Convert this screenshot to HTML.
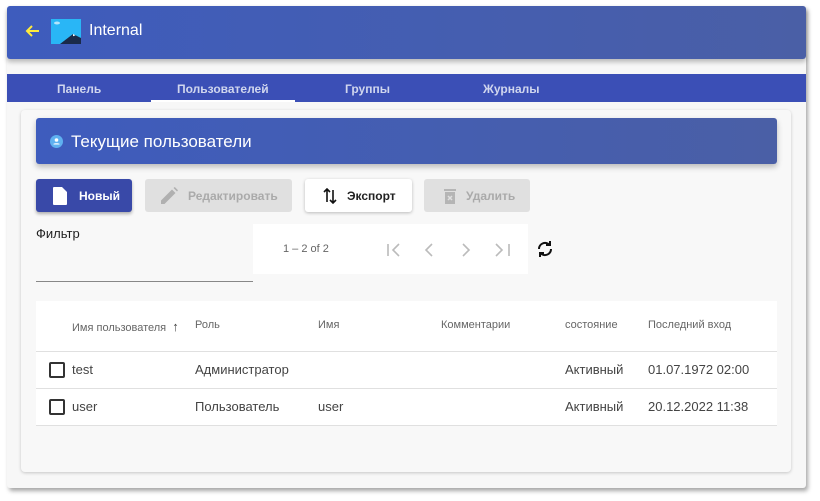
<!DOCTYPE html>
<html><head><meta charset="utf-8"><style>
*{box-sizing:border-box;margin:0;padding:0}
body{width:820px;height:501px;background:#fff;font-family:"Liberation Sans",Arial,sans-serif;position:relative;overflow:hidden}
.frame{position:absolute;left:7px;top:6px;width:799px;height:482px;background:#f7f7f7;box-shadow:2px 3px 4px rgba(0,0,0,.35);border-radius:3px}
.hdr{position:absolute;left:7px;top:6px;width:799px;height:53px;background:linear-gradient(90deg,#3e5cbd,#4a5fa6);border-radius:3px;box-shadow:0 3px 5px rgba(0,0,0,.25);color:#fff}
.tabs{position:absolute;left:7px;top:74px;width:799px;height:28px;background:#3b4fb6;color:#d0d6ee;font-size:12px;font-weight:bold}
.tabs span{position:absolute;top:8px}
.card{position:absolute;left:21px;top:110px;width:770px;height:362px;background:#f8f8f8;border-radius:4px;box-shadow:0 1px 3px rgba(0,0,0,.2)}
.ctitle{position:absolute;left:36px;top:118px;width:741px;height:46px;background:linear-gradient(90deg,#3e5cbd,#4a5fa6);border-radius:3px;box-shadow:0 3px 6px rgba(0,0,0,.25);color:#fff;font-size:17px}
.btn{position:absolute;top:179px;height:33px;border-radius:3px;font-size:12px;font-weight:bold;display:flex;align-items:center}
.tbl{position:absolute;left:36px;top:301px;width:741px;height:125px;background:#fff}
.tbl div{position:absolute}
.th{font-size:11px;color:#666;top:18px}
.td{font-size:13px;color:#444}
.line{left:0;width:741px;height:1px;background:#e0e0e0}
.cb{width:16px;height:16px;border:2px solid #333;border-radius:2px;left:13px}
</style></head><body>
<div class="frame"></div>
<div class="hdr">
 <svg style="position:absolute;left:17px;top:17px" width="16" height="16" viewBox="0 0 16 16"><path d="M15 8H3M8 3L3 8l5 5" stroke="#ffeb3b" stroke-width="2" fill="none"/></svg>
 <svg style="position:absolute;left:44px;top:13px" width="30" height="25" viewBox="0 0 30 25"><rect width="30" height="25" fill="#29b6f6"/><path d="M9 25L22 15l8 4v6z" fill="#1a2a4a"/><path d="M22 15l2.5 1.2-2.5 1z" fill="#fff"/><ellipse cx="6" cy="4" rx="3" ry="1.5" fill="#b3e5fc"/></svg>
 <span style="position:absolute;left:82px;top:16px;font-size:16px">Internal</span>
</div>
<div class="tabs">
 <span style="left:50px">Панель</span>
 <span style="left:170px">Пользователей</span>
 <span style="left:338px">Группы</span>
 <span style="left:476px">Журналы</span>
 <div style="position:absolute;left:144px;top:26px;width:144px;height:2px;background:#fff"></div>
</div>
<div class="card"></div>
<div class="ctitle">
 <svg style="position:absolute;left:14px;top:17px" width="13" height="13" viewBox="0 0 13 13"><circle cx="6.5" cy="6.5" r="6.5" fill="#5fb0f0"/><circle cx="6.5" cy="5" r="1.8" fill="#fff"/><path d="M3.5 9.5h6v-.5c0-1-6-1-6 0z" fill="#fff"/></svg>
 <span style="position:absolute;left:35px;top:14px">Текущие пользователи</span>
</div>
<div class="btn" style="left:36px;width:96px;background:#3949a8;color:#fff;box-shadow:0 2px 3px rgba(0,0,0,.3)">
 <svg style="margin-left:17px" width="14" height="18" viewBox="0 0 14 18"><path d="M1 0h8l5 5v12a1 1 0 0 1-1 1H1a1 1 0 0 1-1-1V1a1 1 0 0 1 1-1z" fill="#fff"/></svg>
 <span style="margin-left:12px">Новый</span></div>
<div class="btn" style="left:145px;width:147px;background:#e0e0e0;color:#aaa">
 <svg style="margin-left:16px" width="17" height="17" viewBox="0 0 17 17"><path d="M0 17v-3.5L11 2.5 14.5 6 3.5 17zM12.5 1l1.3-1L17 3.2l-1 1.3z" fill="#b0b0b0"/></svg>
 <span style="margin-left:10px">Редактировать</span></div>
<div class="btn" style="left:305px;width:107px;background:#fff;color:#222;box-shadow:0 1px 3px rgba(0,0,0,.25)">
 <svg style="margin-left:18px" width="14" height="16" viewBox="0 0 14 16" fill="none" stroke="#111" stroke-width="1.6"><path d="M4 14V1M1 4l3-3 3 3M10 2v13M7 12l3 3 3-3"/></svg>
 <span style="margin-left:10px">Экспорт</span></div>
<div class="btn" style="left:424px;width:106px;background:#e0e0e0;color:#aaa">
 <svg style="margin-left:20px" width="12" height="16" viewBox="0 0 12 16"><rect x="0" y="1" width="12" height="2" fill="#b5b5b5"/><rect x="1" y="4" width="10" height="12" fill="#b5b5b5"/><path d="M4 8l4 4M8 8l-4 4" stroke="#e0e0e0" stroke-width="1.5"/></svg>
 <span style="margin-left:10px">Удалить</span></div>
<div style="position:absolute;left:36px;top:226px;font-size:13px;color:#222">Фильтр</div>
<div style="position:absolute;left:36px;top:281px;width:217px;height:1px;background:#888"></div>
<div style="position:absolute;left:253px;top:224px;width:275px;height:50px;background:#fff"></div>
<div style="position:absolute;left:283px;top:243px;font-size:11px;color:#666">1 – 2 of 2</div>
<svg style="position:absolute;left:386px;top:242px" width="130" height="16" viewBox="0 0 130 16" fill="none" stroke="#bbb" stroke-width="1.6"><path d="M2 2v12M13 2L7 8l6 6M46 2l-6 6 6 6M77 2l6 6-6 6M110 2l6 6-6 6M123 2v12"/></svg>
<svg style="position:absolute;left:536px;top:240px" width="18" height="18" viewBox="0 0 18 18" fill="none" stroke="#111" stroke-width="2"><path d="M3 9a6 6 0 0 1 10-4.5M15 9a6 6 0 0 1-10 4.5"/><path d="M14 1v4h-4M4 17v-4h4" /></svg>
<div class="tbl">
 <div class="th" style="left:36px">Имя пользователя&nbsp; <span style="font-size:13px;color:#444">↑</span></div>
 <div class="th" style="left:159px">Роль</div>
 <div class="th" style="left:282px">Имя</div>
 <div class="th" style="left:405px">Комментарии</div>
 <div class="th" style="left:529px">состояние</div>
 <div class="th" style="left:612px">Последний вход</div>
 <div class="line" style="top:50px"></div>
 <div class="cb" style="top:61px"></div>
 <div class="td" style="left:36px;top:61px">test</div>
 <div class="td" style="left:159px;top:61px">Администратор</div>
 <div class="td" style="left:529px;top:61px">Активный</div>
 <div class="td" style="left:612px;top:61px">01.07.1972 02:00</div>
 <div class="line" style="top:87px"></div>
 <div class="cb" style="top:98px"></div>
 <div class="td" style="left:36px;top:98px">user</div>
 <div class="td" style="left:159px;top:98px">Пользователь</div>
 <div class="td" style="left:282px;top:98px">user</div>
 <div class="td" style="left:529px;top:98px">Активный</div>
 <div class="td" style="left:612px;top:98px">20.12.2022 11:38</div>
 <div class="line" style="top:124px"></div>
</div>
</body></html>
